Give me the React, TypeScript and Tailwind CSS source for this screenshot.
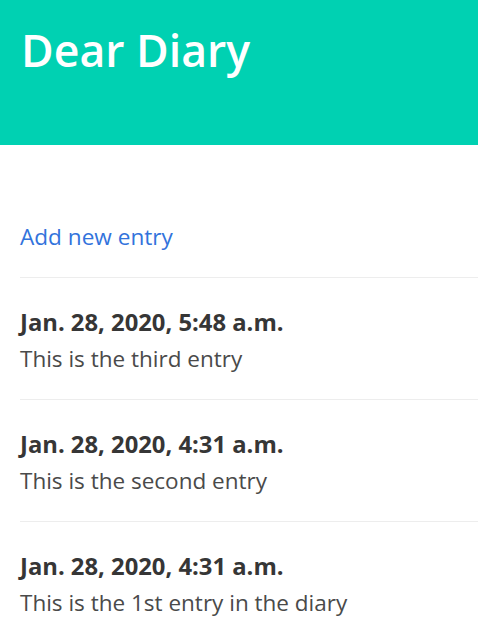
export default function App() {
  const entries = [
    { date: "Jan. 28, 2020, 5:48 a.m.", text: "This is the third entry" },
    { date: "Jan. 28, 2020, 4:31 a.m.", text: "This is the second entry" },
    { date: "Jan. 28, 2020, 4:31 a.m.", text: "This is the 1st entry in the diary" },
  ];

  return (
    <div className="min-h-screen bg-white font-['Open_Sans',sans-serif] text-[#4a4a4a]">
      <section className="h-[145px] bg-[#00d1b2] px-[21px] pt-[22px]">
        <h1 className="text-[44.6px] font-semibold leading-[56px] text-white">Dear Diary</h1>
      </section>

      <div className="pl-5 pt-[77px]">
        <a href="#" className="block text-[22.6px] leading-[30px] text-[#3273dc]">
          Add new entry
        </a>
        <div className="mt-[25px]">
          {entries.map((e, i) => (
            <div key={i} className="border-t border-[#ededed] pt-[28px] pb-[21px]">
              <div className="text-[23.8px] font-bold leading-[32px] text-[#363636]">{e.date}</div>
              <div className="mt-[2px] text-[22.5px] leading-[38px]">{e.text}</div>
            </div>
          ))}
        </div>
      </div>
    </div>
  );
}
